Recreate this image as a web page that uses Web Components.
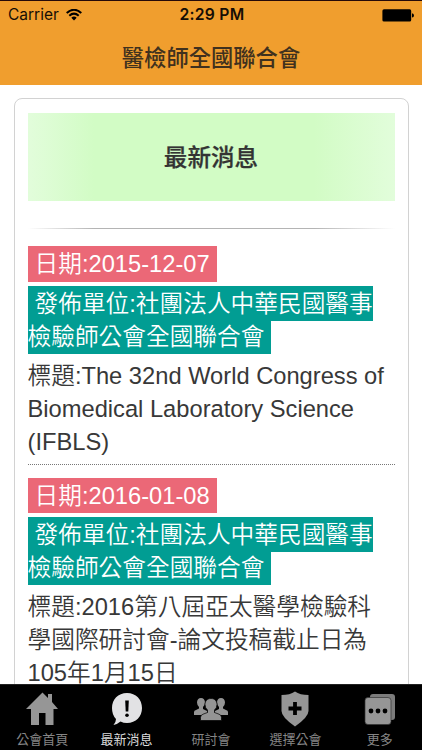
<!DOCTYPE html>
<html lang="zh-Hant">
<head>
<meta charset="utf-8">
<title>最新消息</title>
<style>
html,body{margin:0;height:100%;overflow:hidden;background:#fff}
body{font-family:"Liberation Sans","Noto Sans CJK TC",sans-serif;color:#3a3a3a}
</style>
</head>
<body>
<news-app></news-app>
<script>
const define=(name,html)=>{
  const t=document.createElement('template');
  t.innerHTML=html;
  customElements.define(name,class extends HTMLElement{
    constructor(){super();this.attachShadow({mode:'open'}).append(t.content.cloneNode(true));}
  });
};

define('status-bar',`<style>
:host{display:grid;grid-template-columns:1fr auto 1fr;align-items:center;height:28px;padding:0 8px 0 8px;box-sizing:border-box;font:400 15.5px/28px Inter,sans-serif;color:#160e05}
.left{display:flex;align-items:center;gap:7px}
.time{font-weight:600;font-size:15.7px;letter-spacing:.25px;margin-left:2px}
.bat{justify-self:end}
svg{display:block}
</style>
<div class="left"><span>Carrier</span><svg width="16" height="12" viewBox="0 0 16 12"><path d="M.7 4.1Q8-2.6 15.3 4.1M3.3 6.8Q8 2.5 12.7 6.8" fill="none" stroke="#000" stroke-width="2"/><path d="M5.3 8.8Q8 6.4 10.7 8.8L8 11.6Z"/></svg></div>
<span class="time">2:29 PM</span>
<svg class="bat" width="32" height="13" viewBox="0 0 32 13"><rect x=".4" y=".3" width="28.8" height="12.2" rx="1.6"/><path d="M30 4.2Q32 4.6 32 6.4T30 8.6Z"/></svg>`);

define('title-bar',`<style>
:host{display:block;height:57px;font:500 22.3px/54px "Noto Sans CJK TC",sans-serif;text-align:center;color:#40311e}
</style><slot></slot>`);

define('news-card',`<style>
:host{display:block;margin:13px 13px 0 13.5px;border:1.5px solid #d2d2d2;border-radius:8px;box-sizing:border-box;height:720px;padding:14px 13.5px 0 13px}
h1{margin:0;height:88px;font:500 23.6px/86px "Noto Sans CJK TC",sans-serif;text-align:center;color:#333;-webkit-text-stroke:.25px #333;background:linear-gradient(90deg,#e2fddb,#d2fcc5 18%,#d2fcc5 78%,#e2fddb)}
hr{border:0;height:1px;margin:27px 0 19px;background:linear-gradient(90deg,#fff,#b4b4b4 18%,#b4b4b4 78%,#fff)}
</style><h1><slot name="heading"></slot></h1><hr><slot></slot>`);

define('news-item',`<style>
:host{display:block;font-size:23.7px;line-height:33px;font-weight:350;color:#383838;padding-bottom:5px;border-bottom:1px dotted #777;margin-bottom:14px}
p{margin:0 0 6.6px}
p:last-child{margin:0}
.tag{color:#fff;padding:4.6px 7px}
.date{background:#eb6877}
.unit{background:#019d93}
</style>
<p><span class="tag date">日期:<slot name="date"></slot></span></p>
<p><span class="tag unit">發佈單位:<slot name="unit"></slot></span></p>
<p>標題:<slot></slot></p>`);

define('tab-item',`<style>
:host{display:flex;flex-direction:column;align-items:center;flex:1;color:#858585;font:400 13px/18px "Noto Sans CJK TC",sans-serif}
:host([active]){color:#dcdcdc}
.icon{height:41px;display:flex;align-items:center;justify-content:center;margin-top:3px}
.label{margin-top:1px}
</style><div class="icon"><slot name="icon"></slot></div><div class="label"><slot></slot></div>`);

define('tab-bar',`<style>
:host{display:flex;height:66px;box-sizing:border-box;background:#000;border-top:1px solid #222}
svg{display:block}
</style>
<tab-item><svg slot="icon" width="34" height="36" viewBox="0 0 34 36" fill="#969696"><path d="M17.5 1.5 23 7V3H27V11L33 18H28.5V34H20.5V22H14V34H6V18H1Z"/></svg>公會首頁</tab-item>
<tab-item active><svg slot="icon" width="32" height="36" viewBox="0 0 32 36"><path d="M16 2C25 2 31 8.500 31 17S25 32 16 32Q12.500 32 9.500 30.500Q6 33.500 2.500 34Q5 31 5 28Q1 24 1 17C1 8.500 7 2 16 2Z" fill="#e2e2e4"/><path d="M14.200 9.500H17.800L17.300 20.500H14.700Z"/><circle cx="16" cy="24.300" r="1.800"/></svg>最新消息</tab-item>
<tab-item><svg slot="icon" width="36" height="32" viewBox="0 0 36 32" fill="#949494"><path d="M8 5C10.500 5 12 7 12 9.500Q12 12 10 14V16L14 18V22H1V19Q1 17.500 3 17L6 15.500V14Q4 12 4 9.500C4 7 5.500 5 8 5Z"/><path d="M28 5C30.500 5 32 7 32 9.500Q32 12 30 14V15.500L33 17Q35 17.500 35 19V22H22V18L26 16V14Q24 12 24 9.500C24 7 25.500 5 28 5Z"/><path d="M18 5.500C21.800 5.500 24 8 24 11.500Q24 15 21.500 17V19.500L26 21.200Q28.500 22 28.500 24.500V27.500H7.500V24.500Q7.500 22 10 21.200L14.500 19.500V17Q12 15 12 11.500C12 8 14.200 5.500 18 5.500Z" stroke="#000" stroke-width=".7"/></svg>研討會</tab-item>
<tab-item><svg slot="icon" width="30" height="38" viewBox="0 0 30 38"><path d="M15 1.500Q20 5 28.500 5V21Q28.500 27 15 36.500Q1.500 27 1.500 21V5Q10 5 15 1.500Z" fill="#969696"/><path d="M15 12V25M8.500 18.500H21.500" stroke="#000" stroke-width="3.800"/></svg>選擇公會</tab-item>
<tab-item><svg slot="icon" width="32" height="32" viewBox="0 0 32 32"><rect x="6" y="1" width="25" height="26" rx="3" fill="#7c7c7c"/><rect x="1" y="4.500" width="26" height="27" rx="3" fill="#969696" stroke="#333" stroke-width=".7"/><circle cx="7" cy="18" r="2.400"/><circle cx="14" cy="18" r="2.400"/><circle cx="21" cy="18" r="2.400"/></svg>更多</tab-item>`);

define('news-app',`<style>
:host{display:flex;flex-direction:column;height:750px;width:422px}
header{background:#f09e2e;border-top:1px solid #260a08;height:85px;box-sizing:border-box;flex:none}
main{flex:1;min-height:0;overflow:hidden;display:flow-root}
tab-bar{flex:none}
</style>
<header><status-bar></status-bar><title-bar>醫檢師全國聯合會</title-bar></header>
<main><news-card><span slot="heading">最新消息</span>
<news-item><span slot="date">2015-12-07</span><span slot="unit">社團法人中華民國醫事檢驗師公會全國聯合會</span>The 32nd World Congress of Biomedical Laboratory Science (IFBLS)</news-item>
<news-item><span slot="date">2016-01-08</span><span slot="unit">社團法人中華民國醫事檢驗師公會全國聯合會</span>2016第八屆亞太醫學檢驗科學國際研討會-論文投稿截止日為105年1月15日</news-item>
</news-card></main>
<tab-bar></tab-bar>`);
</script>
</body>
</html>
